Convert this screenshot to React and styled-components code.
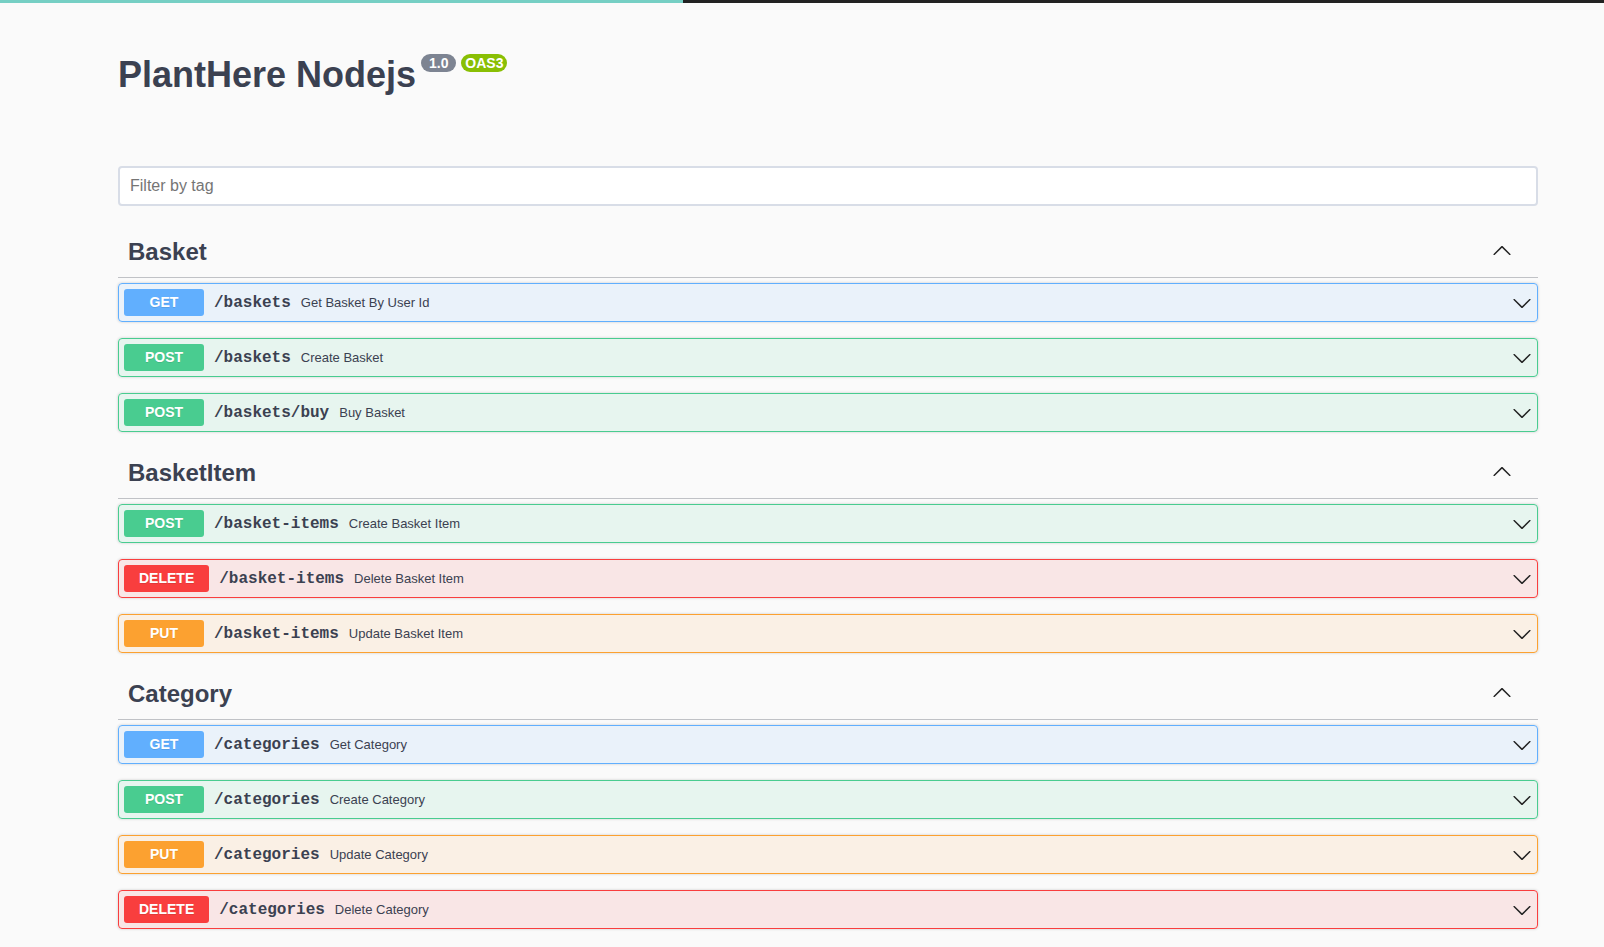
import React from 'react';
import styled, { createGlobalStyle } from 'styled-components';

const GlobalStyle = createGlobalStyle`
  html, body {
    margin: 0;
    padding: 0;
    background: #fafafa;
    overflow: hidden;
    font-family: "Liberation Sans", Arial, sans-serif;
    color: #3b4151;
  }
`;

const METHODS = {
  get: '#61affe',
  post: '#49cc90',
  put: '#fca130',
  delete: '#f93e3e',
};

const TopBar = styled.div`
  height: 3px;
  background: #222;
  display: flex;
`;

const Progress = styled.div`
  width: 683px;
  background: #76cfc4;
`;

const Wrapper = styled.div`
  width: 1420px;
  padding-left: 118px;
  display: flex;
  flex-direction: column;
`;

const Info = styled.div`
  margin: 50px 0;
`;

const Title = styled.h2`
  display: flex;
  align-items: flex-start;
  margin: 0;
  font-size: 36px;
  line-height: 43px;
  font-weight: 700;
  color: #3b4151;
`;

const Stamp = styled.small`
  margin: 1px 0 0 5px;
  padding: 2px 4px;
  border-radius: 57px;
  background: ${p => p.$color};
  color: #fff;
  font-size: 14px;
  line-height: 14px;
  font-weight: 700;
  white-space: pre;
`;

const FilterInput = styled.input`
  display: block;
  box-sizing: border-box;
  width: 100%;
  height: 40px;
  margin: 20px 0 21px;
  padding: 10px;
  border: 2px solid #d8dde7;
  border-radius: 4px;
  background: #fff;
  font-family: "Liberation Sans", Arial, sans-serif;
  font-size: 16px;
  color: #3b4151;
  outline: none;

  &::placeholder {
    color: #757575;
  }
`;

const Section = styled.section`
  display: flex;
  flex-direction: column;
`;

const TagHeading = styled.h3`
  display: flex;
  align-items: center;
  margin: 0 0 5px;
  padding: 10px 26px 10px 10px;
  height: 30px;
  border-bottom: 1px solid rgba(59, 65, 81, 0.3);
  font-size: 24px;
  line-height: 30px;
  font-weight: 700;
  color: #3b4151;

  span {
    flex: 1;
  }

  svg {
    margin-bottom: 4px;
  }
`;

const Op = styled.div`
  box-sizing: border-box;
  height: 39px;
  margin-bottom: 16px;
  padding: 5px;
  display: flex;
  align-items: center;
  border: 1px solid ${p => METHODS[p.$method]};
  border-radius: 4px;
  background: ${p => METHODS[p.$method]}1a;
  box-shadow: 0 0 3px rgba(0, 0, 0, 0.19);
`;

const Method = styled.span`
  box-sizing: border-box;
  min-width: 80px;
  padding: 6px 15px;
  border-radius: 3px;
  background: ${p => METHODS[p.$method]};
  color: #fff;
  font-size: 14px;
  line-height: 15px;
  font-weight: 700;
  text-align: center;
  text-transform: uppercase;
  text-shadow: 0 1px 0 rgba(0, 0, 0, 0.1);
`;

const Path = styled.span`
  padding: 0 10px;
  font-family: "Liberation Mono", "Courier New", monospace;
  font-size: 16px;
  font-weight: 600;
  color: #3b4151;
`;

const Desc = styled.span`
  flex: 1;
  font-size: 13px;
  color: #3b4151;
`;

const ArrowDown = () => (
  <svg width="20" height="20" viewBox="0 0 20 20" fill="#222">
    <path d="M17.418 6.109c.272-.268.709-.268.979 0s.271.701 0 .969l-7.908 7.83c-.27.268-.707.268-.979 0l-7.908-7.83c-.27-.268-.27-.701 0-.969.271-.268.709-.268.979 0L10 13.25l7.418-7.141z" />
  </svg>
);

const ArrowUp = () => (
  <svg width="20" height="20" viewBox="0 0 20 20" fill="#222">
    <path d="M17.418 14.908c.272.268.709.268.979 0s.271-.701 0-.969l-7.908-7.83c-.27-.268-.707-.268-.979 0l-7.908 7.83c-.27.268-.27.701 0 .969.271.268.709.268.979 0L10 7.767l7.418 7.141z" />
  </svg>
);

const groups = [
  {
    name: 'Basket',
    ops: [
      ['get', '/baskets', 'Get Basket By User Id'],
      ['post', '/baskets', 'Create Basket'],
      ['post', '/baskets/buy', 'Buy Basket'],
    ],
  },
  {
    name: 'BasketItem',
    ops: [
      ['post', '/basket-items', 'Create Basket Item'],
      ['delete', '/basket-items', 'Delete Basket Item'],
      ['put', '/basket-items', 'Update Basket Item'],
    ],
  },
  {
    name: 'Category',
    ops: [
      ['get', '/categories', 'Get Category'],
      ['post', '/categories', 'Create Category'],
      ['put', '/categories', 'Update Category'],
      ['delete', '/categories', 'Delete Category'],
    ],
  },
];

const Operation = ({ method, path, summary }) => (
  <Op $method={method}>
    <Method $method={method}>{method}</Method>
    <Path>{path}</Path>
    <Desc>{summary}</Desc>
    <ArrowDown />
  </Op>
);

const App = () => (
  <>
    <GlobalStyle />
    <TopBar>
      <Progress />
    </TopBar>
    <Wrapper>
      <Info>
        <Title>
          <span>PlantHere Nodejs</span>
          <Stamp $color="#7d8492">{' 1.0 '}</Stamp>
          <Stamp $color="#89bf04">OAS3</Stamp>
        </Title>
      </Info>
      <FilterInput placeholder="Filter by tag" />
      {groups.map(g => (
        <Section key={g.name}>
          <TagHeading>
            <span>{g.name}</span>
            <ArrowUp />
          </TagHeading>
          {g.ops.map(([m, p, s]) => (
            <Operation key={m + p} method={m} path={p} summary={s} />
          ))}
        </Section>
      ))}
    </Wrapper>
  </>
);

export default App;
